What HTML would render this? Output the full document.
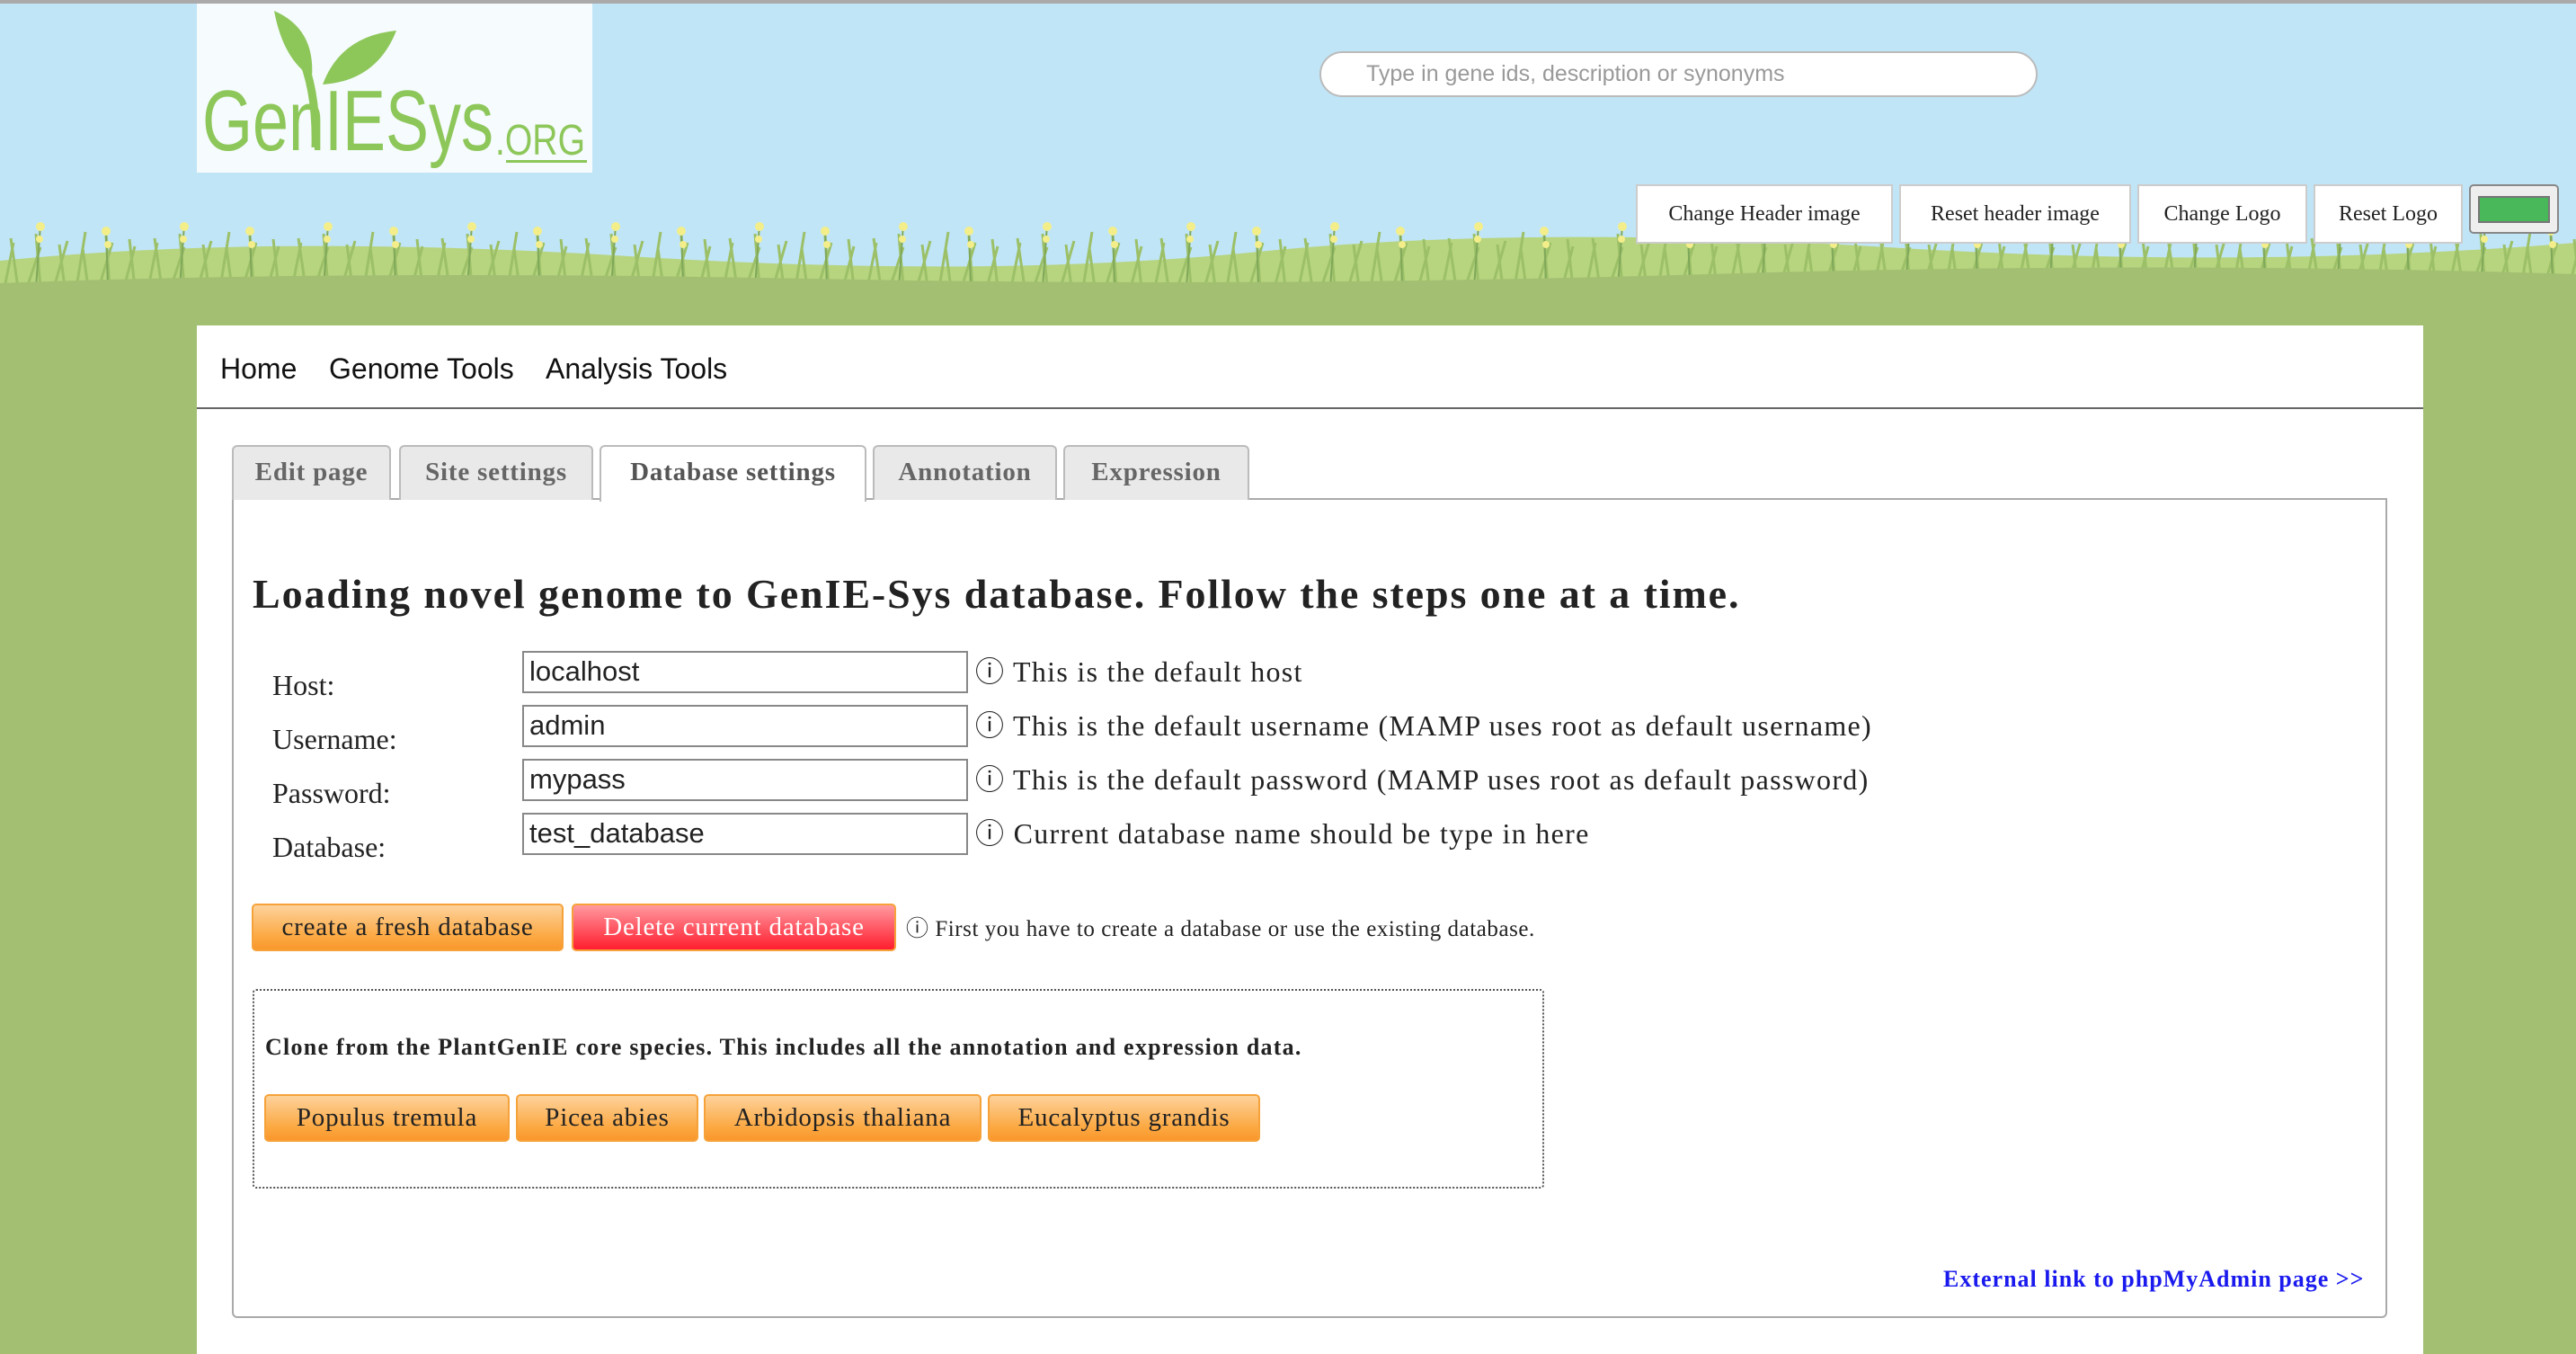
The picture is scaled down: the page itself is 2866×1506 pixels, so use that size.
<!DOCTYPE html>
<html><head><meta charset="utf-8"><style>
*{box-sizing:border-box;margin:0;padding:0}
body{width:2866px;height:1506px;overflow:hidden;background:#a2bf72;position:relative;font-family:"Liberation Serif",serif;color:#222}
.a{position:absolute}
#sky{left:0;top:0;width:2866px;height:362px;background:#c0e5f7;border-top:4px solid #aaa}
#logo{left:219px;top:4px;width:440px;height:188px;background:#f6fbfe}
.hb{position:absolute;top:205px;height:66px;background:#fff;border:2px solid #ccc;font-size:24px;line-height:62px;text-align:center;color:#222}
#search{left:1468px;top:57px;width:799px;height:51px;border:2px solid #bbb;border-radius:26px;background:#fff;font-family:"Liberation Sans",sans-serif;font-size:25px;color:#999;padding-left:50px;line-height:47px}
#main{left:219px;top:362px;width:2477px;height:1144px;background:#fff}
.nav{position:absolute;top:390px;font-family:"Liberation Sans",sans-serif;font-size:32px;color:#111}
.tab{position:absolute;top:495px;height:61px;border:2px solid #bbb;border-bottom:none;border-radius:6px 6px 0 0;background:#e9e9e9;font-weight:bold;font-size:29px;color:#666;text-align:center;line-height:56px;letter-spacing:0.8px}
#panel{left:258px;top:554px;width:2398px;height:912px;border:2px solid #aaa;border-radius:0 0 6px 6px;background:#fff}
.lab{position:absolute;left:303px;font-size:32px}
.inp{position:absolute;left:581px;width:496px;height:47px;border:2px solid #888;font-family:"Liberation Sans",sans-serif;font-size:31px;padding-left:6px;line-height:42px;background:#fff}
.inf{position:absolute;left:1085px;font-size:32px;letter-spacing:1.3px}
.btn{position:absolute;height:53px;border:2px solid #f6a23a;border-radius:5px;background:linear-gradient(#fdd29b,#fca943 70%,#f9972c);font-size:29px;text-align:center;line-height:48px;color:#222;letter-spacing:0.8px}
</style></head><body>
<div id="sky" class="a"></div>
<svg class="a" style="left:0;top:210px" width="2866" height="152" viewBox="0 0 2866 152">
<defs>
<pattern id="g" width="160" height="152" patternUnits="userSpaceOnUse">
<g stroke="#9cc067" stroke-width="3" fill="none">
<path d="M5 110 L15 60 M20 110 L12 55 M30 110 L45 65 M45 110 L40 50 M60 110 L75 58 M72 110 L66 62 M85 110 L95 48 M98 110 L92 66 M110 110 L125 60 M122 110 L118 52 M138 110 L150 64 M150 110 L144 56"/>
</g>
<g stroke="#7fa85a" stroke-width="2" fill="none"><path d="M40 110 L45 40 M120 110 L118 45"/></g>
<g fill="#f3ee8a"><circle cx="45" cy="42" r="5"/><circle cx="44" cy="56" r="4"/><circle cx="118" cy="47" r="5"/><circle cx="120" cy="62" r="4"/></g>
</pattern></defs>
<path d="M0 80 Q300 50 700 75 T1400 70 T2100 65 T2866 60 V152 H0Z" fill="#b7d47f"/>
<rect x="0" y="0" width="2866" height="152" fill="url(#g)"/>
<path d="M0 105 Q400 90 900 100 T1900 95 T2866 95 V152 H0Z" fill="#a2bf72"/>
</svg>
<div id="logo" class="a">
<svg width="440" height="188" viewBox="0 0 440 188">
<path d="M86 8 Q132 28 128 82 Q96 62 86 8Z" fill="#8dc75a"/>
<path d="M222 30 Q160 36 140 90 Q200 86 222 30Z" fill="#8dc75a"/>
<path d="M104 36 Q134 80 132 160" stroke="#8dc75a" stroke-width="9" fill="none"/>
<text x="6" y="163" font-family="Liberation Sans,sans-serif" font-size="96" fill="#8dc75a" textLength="324" lengthAdjust="spacingAndGlyphs">GenIESys</text>
<text x="332" y="168" font-family="Liberation Sans,sans-serif" font-size="48" fill="#8dc75a" textLength="100" lengthAdjust="spacingAndGlyphs">.ORG</text>
<rect x="344" y="174" width="90" height="3" fill="#8dc75a"/>
</svg></div>
<div id="search" class="a">Type in gene ids, description or synonyms</div>
<div class="hb" style="left:1820px;width:286px">Change Header image</div>
<div class="hb" style="left:2113px;width:258px">Reset header image</div>
<div class="hb" style="left:2378px;width:189px">Change Logo</div>
<div class="hb" style="left:2574px;width:166px">Reset Logo</div>
<div class="a" style="left:2747px;top:205px;width:100px;height:55px;background:#eee;border:2px solid #888;border-radius:5px"><div style="margin:11px 8px;height:30px;background:#48b85a;border:2px solid #777"></div></div>
<div id="main" class="a"></div>
<div class="nav" style="left:245px;top:392px">Home</div>
<div class="nav" style="left:366px;top:392px">Genome Tools</div>
<div class="nav" style="left:607px;top:392px">Analysis Tools</div>
<div class="a" style="left:219px;top:453px;width:2477px;height:2px;background:#666"></div>
<div id="panel" class="a"></div>
<div class="tab" style="left:258px;width:177px">Edit page</div>
<div class="tab" style="left:444px;width:216px">Site settings</div>
<div class="tab" style="left:667px;width:297px;background:#fff;color:#555;height:63px">Database settings</div>
<div class="tab" style="left:971px;width:205px">Annotation</div>
<div class="tab" style="left:1183px;width:207px">Expression</div>
<div class="a" style="left:281px;top:634px;font-size:46px;font-weight:bold;color:#222;letter-spacing:1.9px">Loading novel genome to GenIE-Sys database. Follow the steps one at a time.</div>
<div class="lab" style="top:744px">Host:</div>
<div class="lab" style="top:804px">Username:</div>
<div class="lab" style="top:864px">Password:</div>
<div class="lab" style="top:924px">Database:</div>
<div class="inp" style="top:724px">localhost</div>
<div class="inp" style="top:784px">admin</div>
<div class="inp" style="top:844px">mypass</div>
<div class="inp" style="top:904px">test_database</div>
<div class="inf" style="top:722px">ⓘ This is the default host</div>
<div class="inf" style="top:782px">ⓘ This is the default username (MAMP uses root as default username)</div>
<div class="inf" style="top:842px">ⓘ This is the default password (MAMP uses root as default password)</div>
<div class="inf" style="top:902px">ⓘ Current database name should be type in here</div>
<div class="btn" style="left:280px;top:1005px;width:347px">create a fresh database</div>
<div class="btn" style="left:636px;top:1005px;width:361px;background:linear-gradient(#ff9aa0,#ff5a66 50%,#ff1e2e);color:#fff">Delete current database</div>
<div class="a" style="left:1008px;top:1013px;font-size:25px;letter-spacing:0.55px">ⓘ First you have to create a database or use the existing database.</div>
<div class="a" style="left:281px;top:1100px;width:1437px;height:222px;border:2px dotted #555;border-radius:4px"></div>
<div class="a" style="left:295px;top:1150px;font-size:26px;font-weight:bold;letter-spacing:1.25px">Clone from the PlantGenIE core species. This includes all the annotation and expression data.</div>
<div class="btn" style="left:294px;top:1217px;width:273px">Populus tremula</div>
<div class="btn" style="left:574px;top:1217px;width:203px">Picea abies</div>
<div class="btn" style="left:783px;top:1217px;width:309px">Arbidopsis thaliana</div>
<div class="btn" style="left:1099px;top:1217px;width:303px">Eucalyptus grandis</div>
<div class="a" style="left:2162px;top:1408px;font-size:26px;font-weight:bold;color:#1a1aee;letter-spacing:1px">External link to phpMyAdmin page &gt;&gt;</div>
</body></html>
